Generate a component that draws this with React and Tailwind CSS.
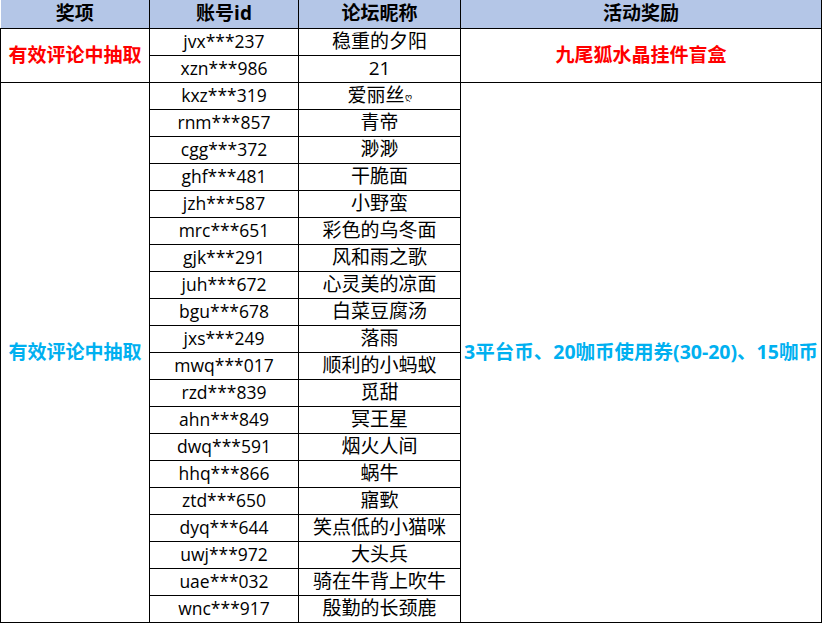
const rows = [
  ['jvx***237', '稳重的夕阳'],
  ['xzn***986', '21'],
  ['kxz***319', '爱丽丝'],
  ['rnm***857', '青帝'],
  ['cgg***372', '渺渺'],
  ['ghf***481', '干脆面'],
  ['jzh***587', '小野蛮'],
  ['mrc***651', '彩色的乌冬面'],
  ['gjk***291', '风和雨之歌'],
  ['juh***672', '心灵美的凉面'],
  ['bgu***678', '白菜豆腐汤'],
  ['jxs***249', '落雨'],
  ['mwq***017', '顺利的小蚂蚁'],
  ['rzd***839', '觅甜'],
  ['ahn***849', '冥王星'],
  ['dwq***591', '烟火人间'],
  ['hhq***866', '蜗牛'],
  ['ztd***650', '寤歅'],
  ['dyq***644', '笑点低的小猫咪'],
  ['uwj***972', '大头兵'],
  ['uae***032', '骑在牛背上吹牛'],
  ['wnc***917', '殷勤的长颈鹿'],
];

const cell = 'border border-black text-center p-0 align-middle';

export default function App() {
  return (
    <div className="w-[822px] h-[623px] bg-white font-['Open_Sans','Noto_Sans_CJK_SC',sans-serif] text-black">
      <table className="border-collapse table-fixed w-[822px]">
        <colgroup>
          <col className="w-[149px]" />
          <col className="w-[149px]" />
          <col className="w-[162px]" />
          <col />
        </colgroup>
        <thead>
          <tr className="h-[28px] bg-[#b4c6e7] text-[19px] font-bold leading-none">
            <th className={`${cell} border-t-0 border-l-0`}>奖项</th>
            <th className={`${cell} border-t-0`}>账号id</th>
            <th className={`${cell} border-t-0`}>论坛昵称</th>
            <th className={`${cell} border-t-0`}>活动奖励</th>
          </tr>
        </thead>
        <tbody>
          {rows.map(([id, name], i) => (
            <tr key={id} className="h-[27px] leading-none">
              {i === 0 && (
                <td rowSpan={2} className={`${cell} text-[19px] font-bold text-[#ff0000]`}>有效评论中抽取</td>
              )}
              {i === 2 && (
                <td rowSpan={20} className={`${cell} text-[19px] font-bold text-[#00b0f0]`}>有效评论中抽取</td>
              )}
              <td className={`${cell} text-[17.5px]`}>{id}</td>
              <td className={`${cell} text-[19px]`}>
                {name}
                {i === 2 && <span className="text-[9px] align-middle">ღ</span>}
              </td>
              {i === 0 && (
                <td rowSpan={2} className={`${cell} text-[19px] font-bold text-[#ff0000]`}>九尾狐水晶挂件盲盒</td>
              )}
              {i === 2 && (
                <td rowSpan={20} className={`${cell} text-[19.5px] font-bold text-[#00b0f0] whitespace-nowrap`}>3平台币、20咖币使用券(30-20)、15咖币</td>
              )}
            </tr>
          ))}
        </tbody>
      </table>
    </div>
  );
}
